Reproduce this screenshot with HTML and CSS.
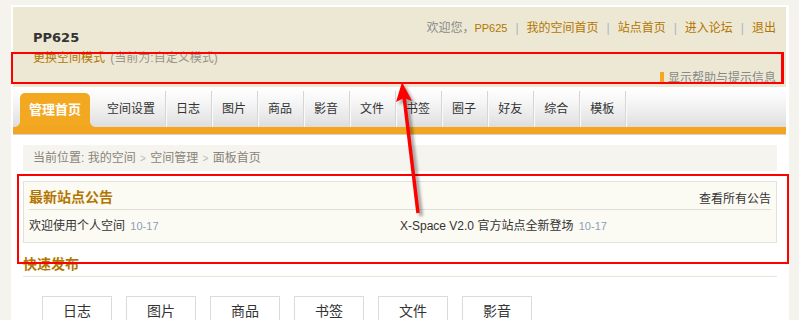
FILE: index.html
```html
<!DOCTYPE html>
<html lang="zh-CN">
<head>
<meta charset="utf-8">
<title>我的空间 - 面板首页</title>
<link rel="stylesheet" href="styles.css">
</head>
<body>
<div class="page">
  <div class="header">
    <div class="hd-left">
      <div class="uname">PP625</div>
      <div class="mode"><a class="link">更换空间模式</a> <span class="muted">(当前为:自定义模式)</span></div>
    </div>
    <div class="hd-right">
      <div class="toplinks">
        <span class="gray">欢迎您，</span><a class="link latin">PP625</a><span class="sep">|</span><a class="link">我的空间首页</a><span class="sep">|</span><a class="link">站点首页</a><span class="sep">|</span><a class="link">进入论坛</a><span class="sep">|</span><a class="link">退出</a>
      </div>
      <div class="help">显示帮助与提示信息</div>
    </div>
  </div>

  <div class="nav">
    <ul class="tabs">
      <li class="tab active">管理首页</li>
      <li class="tab wide">空间设置</li>
      <li class="tab">日志</li>
      <li class="tab">图片</li>
      <li class="tab">商品</li>
      <li class="tab">影音</li>
      <li class="tab">文件</li>
      <li class="tab">书签</li>
      <li class="tab">圈子</li>
      <li class="tab">好友</li>
      <li class="tab">综合</li>
      <li class="tab">模板</li>
    </ul>
  </div>

  <div class="content">
    <div class="crumb">当前位置: 我的空间 <span class="gt">&gt;</span> 空间管理 <span class="gt">&gt;</span> 面板首页</div>

    <div class="notice">
      <div class="notice-hd">
        <h3 class="title">最新站点公告</h3>
        <a class="more">查看所有公告</a>
      </div>
      <ul class="notice-list">
        <li><a>欢迎使用个人空间</a> <span class="date">10-17</span></li>
        <li><a><span class="latin">X-Space V2.0</span> 官方站点全新登场</a> <span class="date">10-17</span></li>
      </ul>
    </div>

    <h3 class="title sec-title">快速发布</h3>
    <div class="quick">
      <a class="qbtn">日志</a>
      <a class="qbtn">图片</a>
      <a class="qbtn">商品</a>
      <a class="qbtn">书签</a>
      <a class="qbtn">文件</a>
      <a class="qbtn">影音</a>
    </div>
  </div>
</div>

<div class="anno anno-1"></div>
<div class="anno anno-2"></div>
<svg class="arrow" width="799" height="320" viewBox="0 0 799 320">
  <defs>
    <filter id="blur" x="-20%" y="-20%" width="140%" height="140%">
      <feGaussianBlur stdDeviation="1.6"/>
    </filter>
  </defs>
  <g fill="#000" stroke="#000" opacity="0.35" filter="url(#blur)" transform="translate(3 3)">
    <line x1="418" y1="213" x2="404" y2="96" stroke-width="4"/>
    <polygon points="402,82 412,101 404,98 396,102" stroke="none"/>
  </g>
  <g fill="#f00" stroke="#f00">
    <line x1="418" y1="213" x2="404" y2="96" stroke-width="3.5"/>
    <polygon points="402,82 412,101 404,98 396,102" stroke="none"/>
  </g>
</svg>
</body>
</html>
```

FILE: styles.css
```css
html, body {
  margin: 0;
  padding: 0;
  height: 320px;
  overflow: hidden;
}

body {
  background: #f4f3ee;
  font-family: "Liberation Sans", "Noto Sans CJK SC", sans-serif;
  font-size: 12px;
  color: #333;
  position: relative;
}

a { text-decoration: none; color: inherit; cursor: pointer; }
ul { list-style: none; margin: 0; padding: 0; }
h3 { margin: 0; }

.page {
  margin: 5px 0 0 11px;
  width: 773px;
  padding: 2px 3px 0 2px;
  background: #fff;
  height: 313px;
  overflow: hidden;
}

/* header */
.header {
  height: 80px;
  background: #ede8d4;
  display: flex;
  justify-content: space-between;
  padding: 0 10px 0 20px;
}

.hd-left {
  padding-top: 23px;
}

.uname {
  font-family: "DejaVu Sans", sans-serif;
  font-weight: bold;
  font-size: 13px;
  line-height: 16px;
  color: #333;
}

.mode {
  margin-top: 4px;
  line-height: 16px;
}

.link { color: #b27600; }
.muted { color: #9a9588; margin-left: 2px; }
.gray { color: #8a8a8a; }
.latin { font-family: "Liberation Sans", sans-serif; font-size: 11px; }

.hd-right {
  display: flex;
  flex-direction: column;
  justify-content: space-between;
  align-items: flex-end;
  padding: 13px 0 3px;
}

.toplinks {
  line-height: 16px;
  display: flex;
  align-items: center;
}

.sep {
  color: #a9b5c9;
  margin: 0 8px;
}

.help {
  line-height: 16px;
  color: #888;
  border-left: 4px solid #f5a623;
  padding-left: 4px;
  height: 12px;
  display: flex;
  align-items: center;
}

/* nav */
.nav {
  margin-top: 1px;
  height: 39px;
  background: linear-gradient(#ffffff 0%, #f6f6f6 35%, #e6e6e6 80%, #dddddd 100%);
  border-bottom: 7px solid #f2a521;
  box-shadow: 0 1px 0 #d8d2c2;
}

.tabs {
  display: flex;
  align-items: flex-end;
  height: 39px;
  padding-left: 7px;
}

.tab {
  height: 36px;
  line-height: 36px;
  padding: 0 11px 0 10px;
  border-right: 1px solid #d6d6d6;
  box-shadow: 1px 0 0 #fafafa;
  color: #333;
  font-size: 12px;
  white-space: nowrap;
}

.tab.wide {
  padding: 0 10px 0 17px;
}

.tab.active {
  position: relative;
  width: 70px;
  box-sizing: border-box;
  padding: 0;
  height: 34px;
  line-height: 34px;
  text-align: center;
  background: #f3a822;
  border: none;
  border-radius: 5px 5px 0 0;
  box-shadow: none;
  color: #fff;
  font-weight: bold;
  font-size: 13px;
}

.tab.active::before,
.tab.active::after {
  content: "";
  position: absolute;
  bottom: 0;
  width: 5px;
  height: 5px;
}

.tab.active::before {
  left: -5px;
  background: radial-gradient(circle at 0 0, transparent 4.5px, #f3a822 5px);
}

.tab.active::after {
  right: -5px;
  background: radial-gradient(circle at 100% 0, transparent 4.5px, #f3a822 5px);
}

/* content */
.content {
  padding: 11px 9px 0 10px;
}

.crumb {
  height: 26px;
  line-height: 26px;
  background: #f5f4ef;
  padding-left: 10px;
  color: #8a8478;
}

.gt {
  color: #b8b8b8;
  font-size: 10px;
  margin: 0 1px;
}

.notice {
  margin-top: 10px;
  border: 1px solid #e3e2da;
  background: #fbfaf3;
  padding: 3px 5px 4px;
}

.notice-hd {
  display: flex;
  justify-content: space-between;
  align-items: center;
  height: 24px;
  border-bottom: 1px solid #e0dfd6;
}

.title {
  font-size: 14px;
  font-weight: bold;
  color: #b27600;
  line-height: 24px;
}

.more { color: #333; }

.notice-list {
  display: flex;
  margin-top: 4px;
}

.notice-list li {
  flex: 1 1 50%;
  line-height: 24px;
  color: #333;
}

.notice-list .latin { font-size: 12px; }

.date {
  color: #8c9ebb;
  font-size: 11px;
  margin-left: 2px;
}

.sec-title {
  margin-top: 9px;
  border-bottom: 1px solid #ebe6d6;
}

.quick {
  display: flex;
  gap: 14px;
  padding: 19px 0 0 19px;
}

.qbtn {
  width: 68px;
  height: 30px;
  line-height: 28px;
  border: 1px solid #dcdcd6;
  text-align: center;
  font-size: 14px;
  color: #333;
  background: #fff;
}

/* annotation overlays */
.anno {
  position: absolute;
  border: 2px solid #f00;
  box-sizing: border-box;
  pointer-events: none;
}

.anno-1 {
  left: 11px;
  top: 52px;
  width: 773px;
  height: 32px;
  border-right-width: 3px;
}

.anno-2 {
  left: 17px;
  top: 174px;
  width: 772px;
  height: 90px;
}

.arrow {
  position: absolute;
  left: 0;
  top: 0;
  pointer-events: none;
}
```
